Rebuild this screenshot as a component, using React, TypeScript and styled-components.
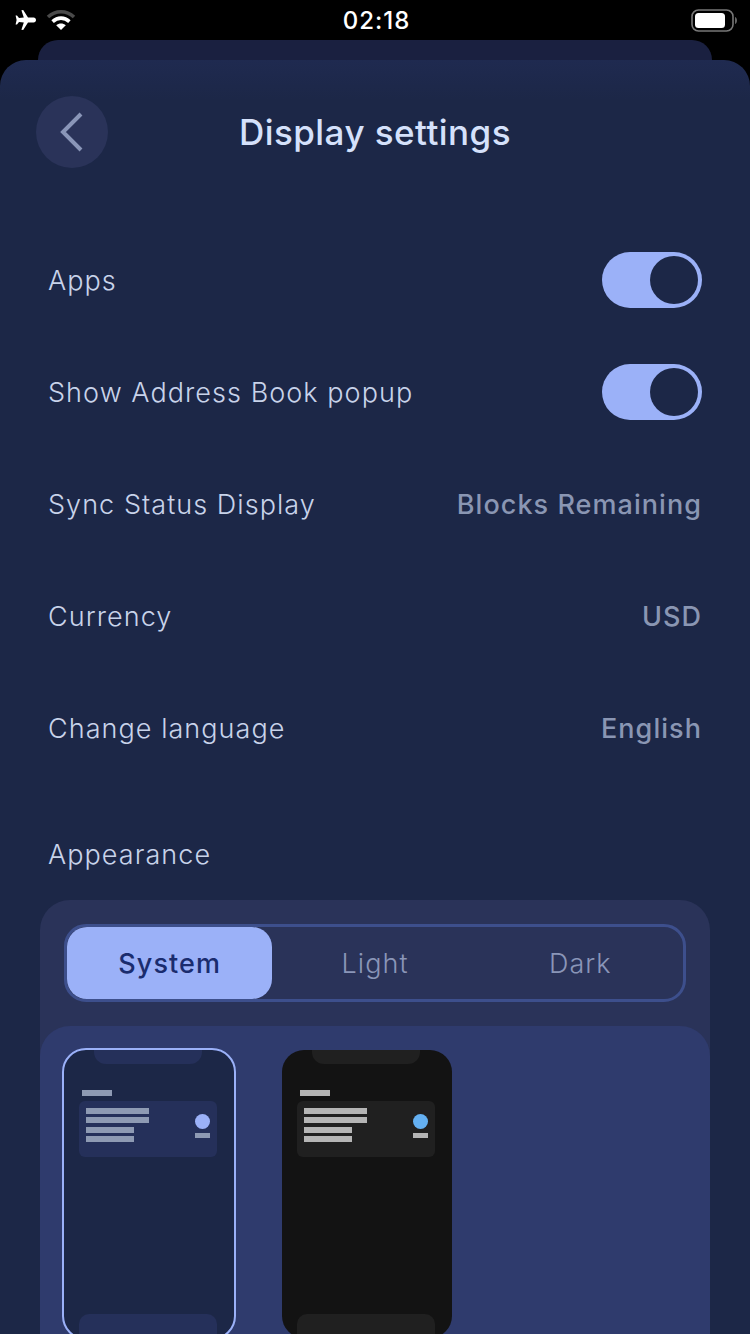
import React from 'react';
import styled, { createGlobalStyle } from 'styled-components';

const GlobalStyle = createGlobalStyle`
  html, body {
    margin: 0;
    padding: 0;
    width: 750px;
    height: 1334px;
    overflow: hidden;
    background: #000;
  }
  * { box-sizing: border-box; }
`;

const Screen = styled.div`
  width: 750px;
  height: 1334px;
  overflow: hidden;
  background: #000;
  font-family: Inter, "Open Sans", sans-serif;
`;

const StatusBar = styled.div`
  height: 40px;
  padding: 0 12px 0 15px;
  display: grid;
  grid-template-columns: 1fr auto 1fr;
  align-items: center;
`;

const StatusLeft = styled.div`
  display: flex;
  align-items: center;
  gap: 10px;
`;

const StatusRight = styled.div`
  display: flex;
  justify-content: flex-end;
  align-items: center;
`;

const Clock = styled.span`
  font-size: 24px;
  font-weight: 500;
  color: #fff;
  letter-spacing: 1px;
`;

const Peek = styled.div`
  height: 20px;
  margin: 0 38px;
  background: #1a2040;
  border-radius: 20px 20px 0 0;
`;

const Sheet = styled.div`
  height: 1274px;
  background: linear-gradient(#1f2a50 0, #1c2747 40px);
  border-radius: 26px 26px 0 0;
  padding-top: 36px;
`;

const Header = styled.header`
  display: grid;
  grid-template-columns: 72px 1fr 72px;
  align-items: center;
  padding: 0 36px;
  margin-bottom: 56px;
`;

const BackButton = styled.button`
  width: 72px;
  height: 72px;
  border: none;
  padding: 0;
  border-radius: 50%;
  background: #2a3359;
  display: flex;
  align-items: center;
  justify-content: center;
`;

const Title = styled.h1`
  margin: 0;
  text-align: center;
  font-size: 35px;
  font-weight: 500;
  letter-spacing: 0.45px;
  color: #d5e1fb;
`;

const Row = styled.div`
  height: 112px;
  padding: 0 48px 0 49px;
  display: flex;
  align-items: center;
  justify-content: space-between;
`;

const RowLabel = styled.span`
  margin-left: -1px;
  font-size: 27px;
  font-weight: 300;
  letter-spacing: 1.05px;
  color: #c8d3ea;
`;

const RowValue = styled.span`
  font-size: 27px;
  font-weight: 500;
  letter-spacing: 1.05px;
  color: #8a96b3;
`;

const Toggle = styled.div`
  width: 100px;
  height: 56px;
  padding: 4px;
  border-radius: 28px;
  background: #9bb1f8;
  display: flex;
  justify-content: flex-end;
`;

const ToggleThumb = styled.div`
  width: 48px;
  height: 48px;
  border-radius: 50%;
  background: #1c2747;
`;

const SectionLabel = styled.div`
  padding: 0 48px;
  margin-top: 54px;
  height: 34px;
  line-height: 34px;
  font-size: 27px;
  font-weight: 300;
  letter-spacing: 1.05px;
  color: #c8d3ea;
`;

const AppearanceCard = styled.section`
  margin: 28px 40px 0;
  padding-top: 24px;
  background: #2a3359;
  border-radius: 30px 30px 0 0;
`;

const Segments = styled.div`
  margin: 0 24px;
  height: 78px;
  border: 3px solid #3d4f8c;
  border-radius: 22px;
  display: grid;
  grid-template-columns: repeat(3, 1fr);
`;

const Segment = styled.div<{ $active?: boolean }>`
  border-radius: 20px;
  display: flex;
  align-items: center;
  justify-content: center;
  font-size: 27px;
  letter-spacing: 1.05px;
  font-weight: ${(p) => (p.$active ? 500 : 300)};
  color: ${(p) => (p.$active ? '#1a2c6e' : '#8a96b8')};
  background: ${(p) => (p.$active ? '#9bb1f8' : 'transparent')};
`;

const PreviewPanel = styled.div`
  margin-top: 24px;
  padding: 22px;
  height: 400px;
  background: #2f3b6d;
  border-radius: 30px 30px 0 0;
  display: flex;
  gap: 44px;
`;

const Preview = styled.div<{ $dark?: boolean; $selected?: boolean }>`
  width: 174px;
  height: 292px;
  border: 2px solid ${(p) => (p.$selected ? '#9bb1f8' : 'transparent')};
  border-radius: 24px;
  background: ${(p) => (p.$dark ? '#131313' : '#1c2747')};
  background-clip: padding-box;
  padding: 0 17px 0 15px;
  display: flex;
  flex-direction: column;
`;

const Notch = styled.div<{ $dark?: boolean }>`
  width: 108px;
  height: 14px;
  margin: 0 0 0 15px;
  border-radius: 0 0 12px 12px;
  background: ${(p) => (p.$dark ? '#202020' : '#25305a')};
`;

const PreviewLabel = styled.div<{ $dark?: boolean }>`
  width: 30px;
  height: 6px;
  margin: 26px 0 5px 3px;
  background: ${(p) => (p.$dark ? '#b5b5b5' : '#8e9ab3')};
`;

const PreviewCard = styled.div<{ $dark?: boolean }>`
  height: 56px;
  padding: 7px 7px 0;
  border-radius: 6px;
  background: ${(p) => (p.$dark ? '#202020' : '#25305a')};
  display: flex;
  justify-content: space-between;
`;

const PreviewLines = styled.div`
  display: flex;
  flex-direction: column;
  gap: 3.3px;
`;

const PreviewLine = styled.div<{ $dark?: boolean; $short?: boolean }>`
  width: ${(p) => (p.$short ? 48 : 63)}px;
  height: 6px;
  background: ${(p) => (p.$dark ? '#b5b5b5' : '#8e9ab3')};
`;

const PreviewSide = styled.div`
  padding-top: 6px;
  display: flex;
  flex-direction: column;
  gap: 4px;
`;

const PreviewDot = styled.div<{ $dark?: boolean }>`
  width: 15px;
  height: 15px;
  border-radius: 50%;
  background: ${(p) => (p.$dark ? '#64b0f2' : '#9bb1f8')};
`;

const PreviewTick = styled.div<{ $dark?: boolean }>`
  width: 15px;
  height: 5px;
  background: ${(p) => (p.$dark ? '#b5b5b5' : '#8e9ab3')};
`;

const PreviewFooter = styled.div<{ $dark?: boolean }>`
  margin-top: auto;
  height: 24px;
  border-radius: 10px 10px 0 0;
  background: ${(p) => (p.$dark ? '#202020' : '#25305a')};
`;

const AirplaneIcon = () => (
  <svg width="21" height="20" viewBox="0 0 21 20" fill="#fff">
    <path d="M6.4 0.3 L8.2 0 L13 7.6 L18.6 7.6 C20 7.6 21 8.8 21 10 C21 11.2 20 12.4 18.6 12.4 L13 12.4 L8.2 20 L6.4 19.7 L8.8 12.4 L4 12 L2 14.6 L0.6 14.4 L1.6 10 L0.6 5.6 L2 5.4 L4 8 L8.8 7.6 Z" />
  </svg>
);

const WifiIcon = () => (
  <svg width="30" height="22" viewBox="0 0 30 22" fill="none">
    <path d="M2 8 C9.5 1 20.5 1 28 8" stroke="#4a4a4a" strokeWidth="3.6" />
    <path d="M6.6 12.6 C11.6 8 18.4 8 23.4 12.6" stroke="#fff" strokeWidth="3.6" />
    <path d="M15 21 L10.2 16.2 C13 13.8 17 13.8 19.8 16.2 Z" fill="#fff" />
  </svg>
);

const BatteryIcon = () => (
  <svg width="47" height="23" viewBox="0 0 47 23" fill="none">
    <rect x="1" y="1" width="41" height="21" rx="6.5" stroke="#777" strokeWidth="1.6" />
    <rect x="4" y="4" width="30" height="15" rx="3.5" fill="#fff" />
    <path d="M44 8 C45.5 8.6 46 10 46 11.5 C46 13 45.5 14.4 44 15 Z" fill="#666" />
  </svg>
);

const ChevronIcon = () => (
  <svg width="26" height="42" viewBox="0 0 26 42" fill="none">
    <path d="M22 3 L4 21 L22 39" stroke="#8a96b8" strokeWidth="4" />
  </svg>
);

type PhonePreviewProps = { dark?: boolean; selected?: boolean };

const PhonePreview = ({ dark, selected }: PhonePreviewProps) => (
  <Preview $dark={dark} $selected={selected}>
    <Notch $dark={dark} />
    <PreviewLabel $dark={dark} />
    <PreviewCard $dark={dark}>
      <PreviewLines>
        <PreviewLine $dark={dark} />
        <PreviewLine $dark={dark} />
        <PreviewLine $dark={dark} $short />
        <PreviewLine $dark={dark} $short />
      </PreviewLines>
      <PreviewSide>
        <PreviewDot $dark={dark} />
        <PreviewTick $dark={dark} />
      </PreviewSide>
    </PreviewCard>
    <PreviewFooter $dark={dark} />
  </Preview>
);

const App = () => {
  return (
    <>
      <GlobalStyle />
      <Screen>
        <StatusBar>
          <StatusLeft>
            <AirplaneIcon />
            <WifiIcon />
          </StatusLeft>
          <Clock>02:18</Clock>
          <StatusRight>
            <BatteryIcon />
          </StatusRight>
        </StatusBar>
        <Peek />
        <Sheet>
          <Header>
            <BackButton>
              <ChevronIcon />
            </BackButton>
            <Title>Display settings</Title>
          </Header>
          <Row>
            <RowLabel>Apps</RowLabel>
            <Toggle>
              <ToggleThumb />
            </Toggle>
          </Row>
          <Row>
            <RowLabel>Show Address Book popup</RowLabel>
            <Toggle>
              <ToggleThumb />
            </Toggle>
          </Row>
          <Row>
            <RowLabel>Sync Status Display</RowLabel>
            <RowValue>Blocks Remaining</RowValue>
          </Row>
          <Row>
            <RowLabel>Currency</RowLabel>
            <RowValue>USD</RowValue>
          </Row>
          <Row>
            <RowLabel>Change language</RowLabel>
            <RowValue>English</RowValue>
          </Row>
          <SectionLabel>Appearance</SectionLabel>
          <AppearanceCard>
            <Segments>
              <Segment $active>System</Segment>
              <Segment>Light</Segment>
              <Segment>Dark</Segment>
            </Segments>
            <PreviewPanel>
              <PhonePreview selected />
              <PhonePreview dark />
            </PreviewPanel>
          </AppearanceCard>
        </Sheet>
      </Screen>
    </>
  );
};

export default App;
